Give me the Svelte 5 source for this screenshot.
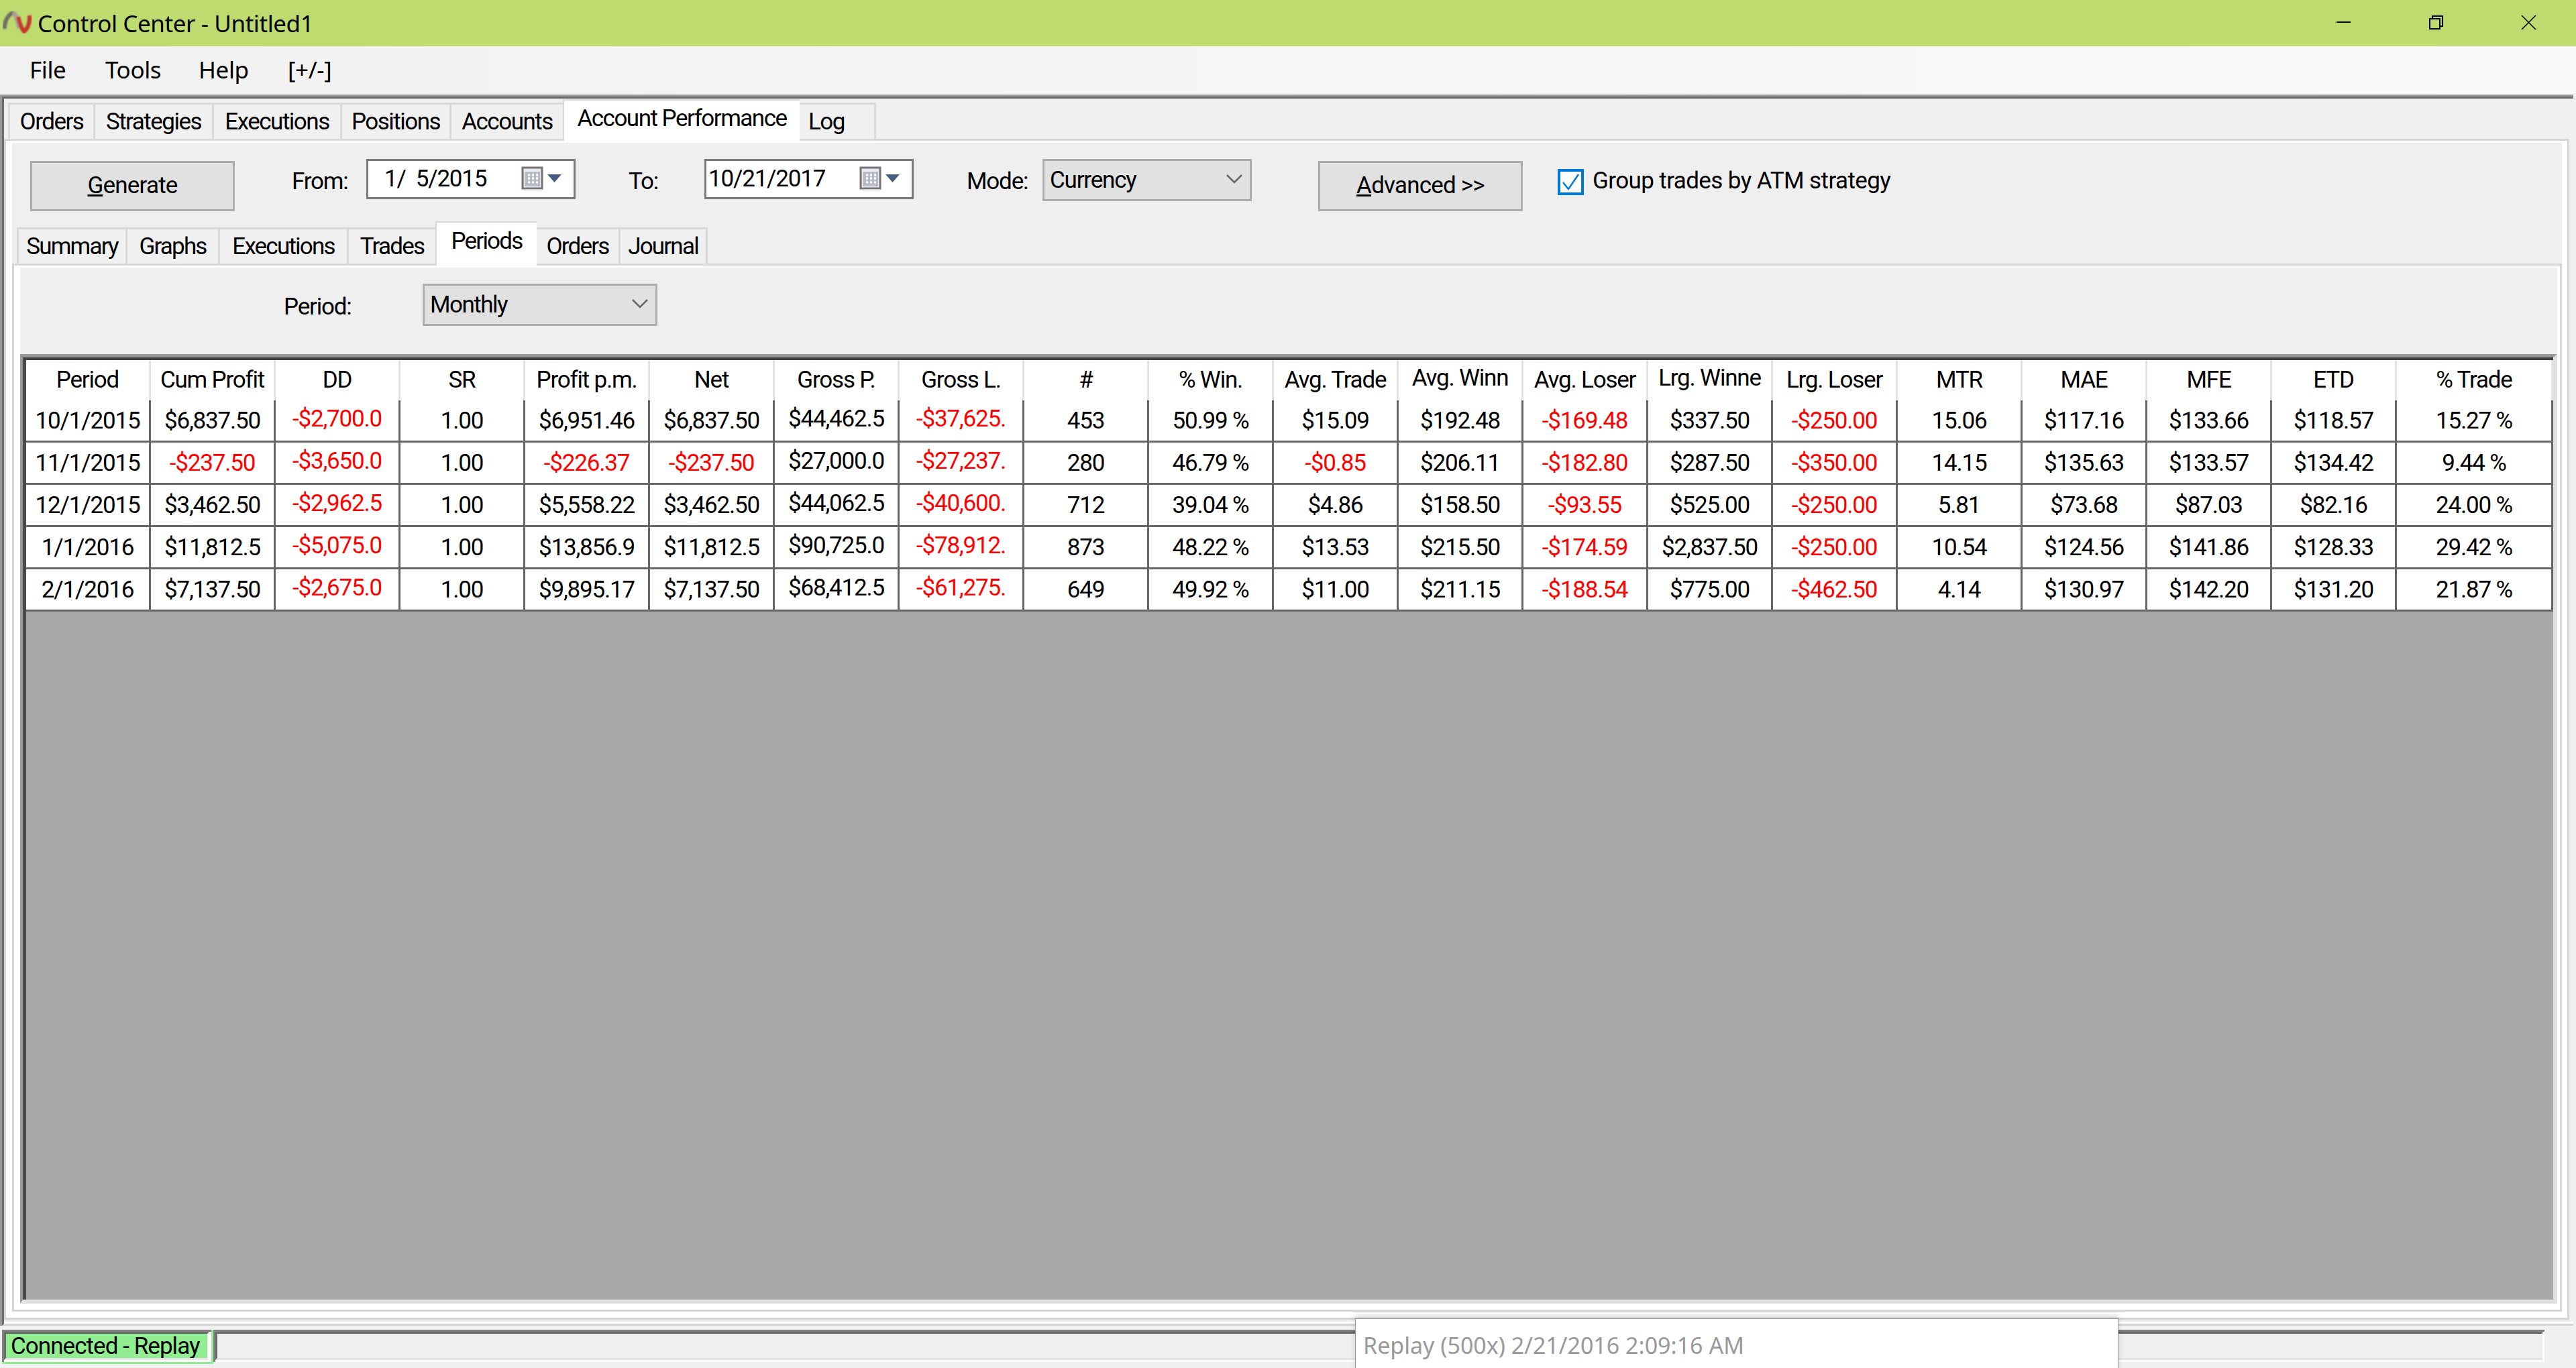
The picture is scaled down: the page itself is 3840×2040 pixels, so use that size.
<script>
  const headers = ['Period','Cum Profit','DD','SR','Profit p.m.','Net','Gross P.','Gross L.','#','% Win.','Avg. Trade','Avg. Winn','Avg. Loser','Lrg. Winne','Lrg. Loser','MTR','MAE','MFE','ETD','% Trade'];
  const raisedHead = [11, 13];
  const raisedCols = [2, 6, 7];
  const rows = [
    ['10/1/2015','$6,837.50','-$2,700.0','1.00','$6,951.46','$6,837.50','$44,462.5','-$37,625.','453','50.99 %','$15.09','$192.48','-$169.48','$337.50','-$250.00','15.06','$117.16','$133.66','$118.57','15.27 %'],
    ['11/1/2015','-$237.50','-$3,650.0','1.00','-$226.37','-$237.50','$27,000.0','-$27,237.','280','46.79 %','-$0.85','$206.11','-$182.80','$287.50','-$350.00','14.15','$135.63','$133.57','$134.42','9.44 %'],
    ['12/1/2015','$3,462.50','-$2,962.5','1.00','$5,558.22','$3,462.50','$44,062.5','-$40,600.','712','39.04 %','$4.86','$158.50','-$93.55','$525.00','-$250.00','5.81','$73.68','$87.03','$82.16','24.00 %'],
    ['1/1/2016','$11,812.5','-$5,075.0','1.00','$13,856.9','$11,812.5','$90,725.0','-$78,912.','873','48.22 %','$13.53','$215.50','-$174.59','$2,837.50','-$250.00','10.54','$124.56','$141.86','$128.33','29.42 %'],
    ['2/1/2016','$7,137.50','-$2,675.0','1.00','$9,895.17','$7,137.50','$68,412.5','-$61,275.','649','49.92 %','$11.00','$211.15','-$188.54','$775.00','-$462.50','4.14','$130.97','$142.20','$131.20','21.87 %']
  ];
  const topTabs = ['Orders','Strategies','Executions','Positions','Accounts','Account Performance','Log'];
  const subTabs = ['Summary','Graphs','Executions','Trades','Periods','Orders','Journal'];
</script>

{#snippet calendar()}
  <svg class="cal" viewBox="0 0 33 37"><rect x="2" y="2" width="29" height="31" fill="#e9edf3" stroke="#7a7270" stroke-width="3"/><rect x="5" y="8" width="23" height="22" fill="#b7bcc6"/><path d="M10 13h3M16 13h3M22 13h3M10 18h3M16 18h3M22 18h3M10 24h3M16 24h3M22 24h3" stroke="#fff" stroke-width="3"/><path d="M4 35h27" stroke="#d8d8d8" stroke-width="2"/></svg>
  <svg class="drop" viewBox="0 0 21 12"><path d="M0 0h21L10.5 12z" fill="#4a5d80"/></svg>
{/snippet}

{#snippet chevron()}
  <svg class="chev" viewBox="0 0 26 14"><path d="M2 1l11 11L24 1" fill="none" stroke="#666" stroke-width="2.5"/></svg>
{/snippet}

<div class="window">
  <header class="titlebar">
    <svg class="logo" viewBox="0 0 44 34" aria-hidden="true">
      <defs><filter id="soft"><feGaussianBlur stdDeviation="1"/></filter></defs>
      <g filter="url(#soft)" fill="none">
        <path d="M3 27C2 15 9 5 16 3" stroke="#6f6d64" stroke-width="6"/>
        <path d="M15 3c6 2 7 14 10 23" stroke="#aaa294" stroke-width="7"/>
        <path d="M23 9c2 8 4 17 9 22 5-4 9-13 8-24" stroke="#c4392c" stroke-width="6"/>
      </g>
    </svg>
    <span class="title">Control Center - Untitled1</span>
    <span class="spacer"></span>
    <div class="winctl">
      <svg viewBox="0 0 24 24"><path d="M2 12h21" stroke="#000" stroke-width="2"/></svg>
      <svg viewBox="0 0 24 24"><path d="M3 7h15v15H3zM7 7V3h15v15h-4" fill="none" stroke="#000" stroke-width="2"/></svg>
      <svg viewBox="0 0 24 24"><path d="M2 2l21 21M23 2L2 23" stroke="#000" stroke-width="1.6"/></svg>
    </div>
  </header>

  <nav class="menubar">
    <span>File</span><span>Tools</span><span>Help</span><span>[+/-]</span>
  </nav>

  <main class="frame">
    <div class="frame-in">
      <div class="tabs top">
        {#each topTabs as t, i}
          <div class="tab" class:sel={i === 5}>{t}</div>
        {/each}
      </div>

      <section class="page">
        <div class="page-body">
          <div class="toolbar">
            <button class="btn gen"><u>G</u>enerate</button>
            <span class="lbl from">From:</span>
            <div class="date">
              <span class="d1">1/ &nbsp;5/2015</span>
              {@render calendar()}
            </div>
            <span class="lbl to">To:</span>
            <div class="date">
              <span class="d2">10/21/2017</span>
              {@render calendar()}
            </div>
            <span class="lbl mode">Mode:</span>
            <div class="combo cm">
              <span>Currency</span>
              {@render chevron()}
            </div>
            <button class="btn adv"><u>A</u>dvanced &gt;&gt;</button>
            <span class="check"><svg viewBox="0 0 39 39"><rect x="2" y="2" width="35" height="35" fill="#fff" stroke="#0078d7" stroke-width="4"/><path d="M8 20l8 10L31 8" fill="none" stroke="#0078d7" stroke-width="2.5"/></svg></span>
            <span class="lbl chk">Group trades by ATM strategy</span>
          </div>

          <div class="tabs sub">
            {#each subTabs as t, i}
              <div class="tab" class:sel={i === 4}>{t}</div>
            {/each}
          </div>

          <section class="inner">
            <div class="inner-body">
              <div class="filter">
                <span class="lbl per">Period:</span>
                <div class="combo cp">
                  <span>Monthly</span>
                  {@render chevron()}
                </div>
              </div>

              <div class="gridwrap">
                <div class="gridarea">
                  <div class="grid">
                    {#each headers as h, c}
                      <div class="cell head" class:up={raisedHead.includes(c)}><span>{h}</span></div>
                    {/each}
                    {#each rows as r}
                      {#each r as v, c}
                        <div class="cell" class:neg={v.startsWith('-')} class:up={raisedCols.includes(c)}><span>{v}</span></div>
                      {/each}
                    {/each}
                  </div>
                </div>
              </div>
            </div>
          </section>
        </div>
      </section>
    </div>
  </main>

  <footer class="status">
    <div class="conn"><div class="conn-a"><div class="conn-b"><span>Connected - Replay</span></div></div></div>
    <div class="rest"><div class="rest-a"></div></div>
    <div class="replay">Replay (500x) 2/21/2016 2:09:16 AM</div>
  </footer>
</div>

<style>
  :global(body) { margin: 0; background: #f0f0f0; overflow: hidden; }
  .window {
    width: 3840px; height: 2040px; display: flex; flex-direction: column; overflow: hidden; position: relative;
    font-family: Roboto, "Noto Sans", sans-serif; font-size: 35px; letter-spacing: -1.2px; color: #000;
  }
  .titlebar { height: 69px; background: #bddb6e; display: flex; align-items: center; flex: none; }
  .logo { width: 44px; height: 34px; margin-left: 4px; margin-right: 8px; margin-bottom: 4px; flex: none; }
  .title { margin-bottom: 1px; font-family: "Noto Sans", sans-serif; font-size: 35px; letter-spacing: -.42px; }
  .spacer { flex: 1; }
  .winctl { display: flex; gap: 114px; margin-right: 59px; margin-bottom: 3px; }
  .winctl svg { width: 24px; height: 24px; }
  .menubar {
    height: 72px; flex: none; background: linear-gradient(90deg, #f1f1f1, #fafafa);
    display: flex; align-items: center; padding-left: 44px; font-family: "Noto Sans", sans-serif; font-size: 35px; letter-spacing: -.4px;
  }
  .menubar span { padding-bottom: 4px; }
  .menubar span:nth-child(1) { width: 113px; }
  .menubar span:nth-child(2) { width: 139px; }
  .menubar span:nth-child(3) { width: 133px; }

  .frame { flex: none; height: 1836px; box-sizing: border-box; width: 3836px; border-top: 3px solid #999; border-left: 3px solid #999; display: flex; }
  .frame-in {
    flex: 1; min-width: 0; box-sizing: border-box; border-top: 3px solid #6b6b6b; border-left: 3px solid #6b6b6b; border-bottom: 3px solid #d6d6d6;
    box-shadow: inset 0 -3px 0 #fff; background: #efefef; padding: 1px 6px 6px 0; display: flex; flex-direction: column;
  }

  .tabs { display: flex; align-items: flex-end; flex: none; position: relative; z-index: 1; }
  .tabs.top { padding-left: 6px; height: 62px; margin-bottom: -3px; }
  .tab {
    box-sizing: border-box; height: 57px; border: 3px solid #d9d9d9; border-right: 0; background: #f0f0f0; flex: none;
    display: flex; align-items: center; justify-content: center; white-space: nowrap; padding-bottom: 0; letter-spacing: -1.5px;
  }
  .tab:last-child { border-right: 3px solid #d9d9d9; }
  .tab.sel { background: #fff; border-width: 2px 2px 0; padding-bottom: 8px; }
  .tab.sel + .tab { border-left: 0; }
  .top .tab.sel { height: 62px; }
  .sub .tab { letter-spacing: -1.8px; }
  .sub .tab.sel { height: 66px; padding-bottom: 10px; }
  .top .tab:nth-child(1) { width: 127px; }
  .top .tab:nth-child(2) { width: 177px; }
  .top .tab:nth-child(3) { width: 191px; }
  .top .tab:nth-child(4) { width: 163px; }
  .top .tab:nth-child(5) { width: 169px; }
  .top .tab:nth-child(6) { width: 353px; }
  .top .tab:nth-child(7) { width: 114px; justify-content: flex-start; padding-left: 13px; }

  .page { flex: 1; min-height: 0; box-sizing: border-box; border: 3px solid #d6d6d6; background: #fff; padding: 3px 8px 9px 9px; display: flex; }
  .page-body { flex: 1; min-width: 0; background: #efefef; display: flex; flex-direction: column; }

  .toolbar { height: 120px; flex: none; display: flex; align-items: flex-start; padding-top: 24px; box-sizing: border-box; }
  .btn {
    margin-top: 3px; width: 305px; height: 75px; flex: none; box-sizing: border-box; border: 3px solid #adadad; background: #e1e1e1;
    font: inherit; letter-spacing: -.8px; padding: 0 0 2px; color: #000;
  }
  .gen { margin-left: 27px; }
  .adv { margin-left: 99px; }
  .lbl { line-height: 60px; white-space: nowrap; flex: none; margin-top: 4px; }
  .from { margin-left: 85px; width: 111px; }
  .to { margin-left: 79px; width: 113px; }
  .mode { margin-left: 79px; width: 113px; }
  .chk { margin-left: 13px; margin-top: 3px; letter-spacing: -.6px; }
  .date {
    width: 312px; height: 60px; flex: none; box-sizing: border-box; border: 3px solid #7a7a7a; background: #fff;
    display: flex; align-items: center; padding-bottom: 2px;
  }
  .date span { flex: 1; white-space: nowrap; }
  .d1 { padding-left: 24px; }
  .d2 { padding-left: 3px; }
  .cal { width: 33px; height: 37px; margin-right: 6px; margin-top: 1px; flex: none; }
  .drop { width: 21px; height: 12px; margin-right: 18px; flex: none; }
  .combo {
    box-sizing: border-box; width: 312px; height: 63px; flex: none; border: 3px solid #adadad; background: #e1e1e1;
    display: flex; align-items: center; padding: 0 10px 0 8px; justify-content: space-between;
  }
  .chev { width: 26px; height: 14px; margin-bottom: 4px; }
  .check { margin-left: 52px; margin-top: 15px; width: 39px; height: 39px; flex: none; }
  .check svg { display: block; width: 39px; height: 39px; }

  .tabs.sub { padding-left: 7px; height: 63px; margin-bottom: -3px; }
  .sub .tab:nth-child(1) { width: 162px; }
  .sub .tab:nth-child(2) { width: 138px; }
  .sub .tab:nth-child(3) { width: 192px; }
  .sub .tab:nth-child(4) { width: 132px; }
  .sub .tab:nth-child(5) { width: 151px; }
  .sub .tab:nth-child(6) { width: 122px; }
  .sub .tab:nth-child(7) { width: 133px; }

  .inner { flex: 1; min-height: 0; box-sizing: border-box; border: 3px solid #d6d6d6; background: #fff; padding: 3px 4px 9px 9px; display: flex; }
  .inner-body { flex: 1; min-width: 0; display: flex; flex-direction: column; background: #efefef; }
  .filter { height: 129px; flex: none; box-sizing: border-box; padding-top: 24px; display: flex; align-items: flex-start; }
  .per { margin-left: 393px; width: 207px; margin-top: 5px; }
  .cp { width: 350px; }
  .cp span { letter-spacing: -1.5px; }

  .gridwrap { flex: 1; min-height: 0; display: flex; box-sizing: border-box; border-style: solid; border-width: 5px 6px 6px 4px; border-color: #999 #e0e0e0 #e0e0e0 #999; }
  .gridarea { flex: 1; min-width: 0; background: #a9a9a9; border-top: 4px solid #3f3f3f; border-left: 5px solid #4a4a4a; }
  .grid { display: grid; grid-template-columns: repeat(19, 186px) 1fr; grid-template-rows: 60px repeat(5, 63px); background: #fff; }
  .cell {
    box-sizing: border-box; border-right: 3px solid #666; border-bottom: 3px solid #666; display: flex; align-items: center; justify-content: center;
    overflow: hidden; white-space: nowrap; background: #fff; padding-bottom: 0;
  }
  .cell.head { border-bottom: 0; border-right-color: #e3e3e3; padding-bottom: 1px; }
  .cell.up span { position: relative; top: -3px; }
  .neg { color: #f00; }

  .status { flex: 1; min-height: 0; position: relative; display: flex; padding: 6px 0 0 3px; align-items: flex-start; }
  .conn { width: 315px; height: 51px; box-sizing: border-box; border-right: 3px solid #90ee90; border-bottom: 3px solid #90ee90; display: flex; flex: none; }
  .conn-a { flex: 1; min-width: 0; box-sizing: border-box; border-top: 3px solid #808080; border-left: 3px solid #808080; background: #fff; padding-right: 3px; padding-bottom: 3px; display: flex; }
  .conn-b {
    flex: 1; min-width: 0; box-sizing: border-box; background: #90ee90; border-top: 3px solid #6b6b6b; border-left: 3px solid #6b6b6b; border-bottom: 3px solid #e3e3e3; border-right: 3px solid #fff;
    display: flex; align-items: center; padding-left: 7px; white-space: nowrap; overflow: hidden; padding-bottom: 0; letter-spacing: -.95px;
  }
  .rest { width: 3475px; height: 48px; box-sizing: border-box; border-top: 3px solid #808080; border-left: 3px solid #808080; background: #fff; padding: 0 3px 3px 0; display: flex; flex: none; }
  .rest-a { flex: 1; background: #efefef; border-top: 3px solid #6b6b6b; border-left: 3px solid #6b6b6b; border-bottom: 3px solid #e3e3e3; }
  .replay {
    position: absolute; left: 2020px; top: -12px; width: 1138px; height: 80px; box-sizing: border-box; background: #fff; color: #999;
    border-top: 2px solid #a4a4a4; border-left: 1px solid #999; border-right: 1px solid #999; box-shadow: 0 -4px 8px rgba(0,0,0,.15);
    padding: 16px 0 0 11px; font-family: "Noto Sans", sans-serif; font-size: 34px; letter-spacing: 0;
  }
</style>
